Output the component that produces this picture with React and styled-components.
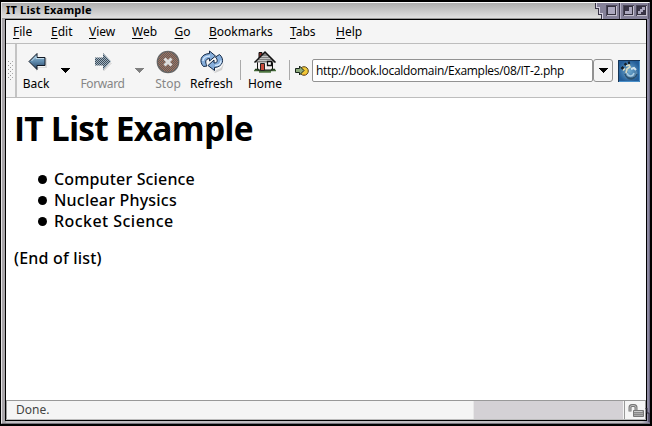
import React from 'react';
import styled, { createGlobalStyle } from 'styled-components';

const Global = createGlobalStyle`
  html, body { margin: 0; padding: 0; background: #000; overflow: hidden; }
  * { box-sizing: border-box; }
  svg { display: block; flex: none; }
`;

const Frame = styled.div`
  width: 652px;
  height: 426px;
  padding: 2px 2px 2px 1px;
  background: #000;
  font-family: "Noto Sans", "Open Sans", sans-serif;
  color: #000;
`;
const Bevel = styled.div`
  position: relative;
  height: 422px;
  background: linear-gradient(90deg, #a8a5a9 0 4px, #c0bdc1 4px 640px, #8a86a0 646px);
  border-top: 1px solid #f8f8f8;
  border-left: 1px solid #e4e2e4;
  border-bottom: 1px solid #77747c;
  border-right: 1px solid #6a6780;
`;
const TitleBar = styled.header`
  display: flex;
  justify-content: space-between;
  height: 16px;
  background: linear-gradient(#aeaeae, #e0e0e0 92%, #999 93%);
`;
const Title = styled.h1`
  margin: 0;
  padding-left: 4px;
  font: bold 11px/14px "Noto Sans", sans-serif;
  letter-spacing: ${(p) => p.$spacing};
  white-space: nowrap;
`;
const Client = styled.div`
  display: flex;
  flex-direction: column;
  width: 642px;
  height: 402px;
  margin-left: 3px;
  border: 1px solid #000;
  background: #f5f5f5;
`;
const MenuBar = styled.nav`
  display: flex;
  height: 24px;
  border-bottom: 1px solid #bdbdbd;
  padding-left: 7px;
`;
const MenuItem = styled.span`
  width: ${(p) => p.$width}px;
  font-size: 12px;
  line-height: 23px;
  white-space: nowrap;
  &::first-letter { text-decoration: underline; text-underline-offset: 2px; }
`;
const Toolbar = styled.div`
  display: flex;
  height: 54px;
  flex: none;
  border-bottom: 1px solid #bdbdbd;
`;
const Grip = styled.div`
  width: 11px;
  padding: 17px 0 0 2px;
  border-right: 2px solid #c4c4c4;
`;
const ToolButton = styled.div`
  display: flex;
  flex-direction: column;
  align-items: center;
  width: ${(p) => p.$width}px;
  padding-top: 4px;
  color: ${(p) => (p.$disabled ? '#858585' : '#000')};
`;
const ToolLabel = styled.span`
  font-size: 12px;
  line-height: 17px;
  letter-spacing: ${(p) => p.$spacing || 0}px;
  white-space: nowrap;
`;
const MenuArrow = styled.div`
  width: ${(p) => p.$width}px;
  padding: 24px 0 0 ${(p) => p.$left}px;
`;
const Divider = styled.div`
  width: 1px;
  height: 20px;
  margin: 16px 0 0 ${(p) => p.$gap || 0}px;
  background: #aaa;
`;
const Location = styled.div`
  display: flex;
  align-items: center;
  height: 23px;
  margin: 15px 0 0 5px;
`;
const Address = styled.div`
  width: 281px;
  height: 23px;
  margin-left: 3px;
  padding-left: 3px;
  border: 1px solid #929292;
  border-radius: 2px;
  background: #fff;
  font-family: "Open Sans", sans-serif;
  font-size: 12px;
  line-height: 21px;
  letter-spacing: ${(p) => p.$spacing}px;
  white-space: nowrap;
  overflow: hidden;
`;
const DropButton = styled.div`
  display: flex;
  align-items: center;
  justify-content: center;
  width: 20px;
  height: 23px;
  margin-right: 5px;
  border: 1px solid #929292;
  border-radius: 3px;
  background: #f5f5f5;
`;
const Page = styled.main`
  flex: 1;
  padding: 13px 0 0 8px;
  background: #fff;
  font-size: 16px;
  font-weight: 500;
  line-height: 21px;
  letter-spacing: 0.2px;
`;
const Heading = styled.h2`
  margin: 0 0 23px;
  font-family: "Open Sans", sans-serif;
  font-size: 33.5px;
  line-height: 35px;
  letter-spacing: -0.8px;
  white-space: nowrap;
`;
const List = styled.ul`
  margin: 0;
  padding: 0;
  list-style: none;
`;
const Item = styled.li`
  display: flex;
  align-items: center;
  height: 21px;
  padding-left: 24px;
  letter-spacing: ${(p) => p.$spacing}px;
  &::before {
    content: '';
    width: 9px;
    height: 9px;
    margin: 0 7px 0 0;
    border-radius: 50%;
    background: #000;
  }
`;
const Ending = styled.p`margin: 16px 0 0;`;
const StatusBar = styled.footer`
  display: flex;
  height: 20px;
  border-top: 1px solid #999;
  border-bottom: 1px solid #bbb;
`;
const Status = styled.span`
  width: 468px;
  padding-left: 9px;
  border-left: 1px solid #999;
  border-right: 1px solid #e8e8e8;
  color: #444;
  font-size: 12px;
  line-height: 17px;
`;
const Progress = styled.div`
  width: 150px;
  background: #d4d1d5;
  border-right: 1px solid #f5f5f5;
`;
const Security = styled.div`
  flex: 1;
  padding: 3px 0 0 3px;
  border-left: 1px solid #999;
  border-right: 1px solid #999;
`;
const Resize = styled.div`
  position: absolute;
  right: -1px;
  bottom: 1px;
`;

const Down = ({ color = '#000' }) => (
  <svg width="9" height="5" shapeRendering="crispEdges"><path d="M0 0h9v1H8v1H7v1H6v1H5v1H4V4H3V3H2V2H1V1H0z" fill={color} /></svg>
);
const BackIcon = () => (
  <svg width="26" height="27">
    <defs>
      <linearGradient id="steel" x2="0" y2="1"><stop stopColor="#9ec3dc" /><stop offset=".5" stopColor="#608caf" /><stop offset="1" stopColor="#233d5c" /></linearGradient>
    </defs>
    <path d="M13 23.500V19h9V10h2v10h-8z" fill="#ccc" opacity=".6" />
    <path d="M6 13.500 14 5.500V9.500H22V17.500H14V21.500z" fill="url(#steel)" stroke="#101824" />
    <path d="M8.500 13l4.500-4.500v2h8" fill="none" stroke="#bed9e8" />
  </svg>
);
const ForwardIcon = () => (
  <svg width="26" height="27">
    <defs><pattern id="mesh" width="2" height="2" patternUnits="userSpaceOnUse"><rect width="2" height="2" fill="#9fb4c2" /><path d="M0 0h1v1H0zM1 1h1v1H1z" fill="#3f4c5a" /></pattern></defs>
    <path d="M13 23l8-8h1l-8 8z" fill="#ccc" />
    <path d="M21 13.500 13 5v4.500H5v8h8V22z" fill="url(#mesh)" />
  </svg>
);
const StopIcon = () => (
  <svg width="26" height="27">
    <defs><pattern id="rust" width="2" height="2" patternUnits="userSpaceOnUse"><rect width="2" height="2" fill="#a8705c" /><path d="M0 0h1v1H0zM1 1h1v1H1z" fill="#5c605f" /></pattern></defs>
    <circle cx="13" cy="14" r="10.700" fill="url(#rust)" stroke="#666" strokeWidth="1.300" />
    <path d="M9.500 10.500l7 7m0-7l-7 7" stroke="#dedede" strokeWidth="3" />
  </svg>
);
const RefreshIcon = () => (
  <svg width="26" height="27">
    <path d="M12 21l4 3 1-2 5-2 3-5-2 7-7 3z" fill="#bbb" opacity=".6" />
    <g stroke="#122744" fill="#86aedb" strokeLinejoin="round">
      <path d="M4.500 18.500C0 14 1 6 10.500 5.500V3L16.500 8 10.500 13V10.500C6 11 6 14 8 18z" />
      <path d="M20.500 6.500C26 11 24 19 15.500 19.500V22.500L9 17.500 15 12V15C19 15 19 12 16.500 9z" />
    </g>
    <path d="M4 13c0-3 3-5 7-5M16 17.500c4 0 6-2 6-5" fill="none" stroke="#d2e6fa" strokeWidth="1.500" />
  </svg>
);
const HomeIcon = () => (
  <svg width="26" height="27">
    <path d="M2 22.500h22M7 24h12" stroke="#4d7540" strokeWidth="1.400" />
    <path d="M5.500 12h15v10h-15z" fill="#f5f0f0" stroke="#111" />
    <path d="M7 4.500h3v6H7z" fill="#98352b" stroke="#111" />
    <path d="M3 13.500 12.500 4 23 14.500H4z" fill="#808080" />
    <path d="M5 12.500h15M7 10.500h11M9 8.500h7" stroke="#d5d5d5" strokeWidth=".8" />
    <path d="M2.500 14.500 13 4 23.500 14.500" fill="none" stroke="#111" strokeWidth="1.500" />
    <path d="M8.500 15.500h4v7h-4z" fill="#c94b3c" stroke="#222" />
    <path d="M15.500 13.500h4v4h-4z" fill="#fff" stroke="#111" strokeWidth="1.300" />
    <path d="M3 21.500h4M19 21.500h4" stroke="#243d21" strokeWidth="1.500" />
  </svg>
);
const GoIcon = () => (
  <svg width="14" height="13">
    <circle cx="9" cy="7" r="4.300" fill="#f0c838" stroke="#554420" />
    <path d="M.5 4.500h4V2L9 6.500 4.500 11V8.500h-4z" fill="#8dab7c" stroke="#18251b" />
    <path d="M8 10.500h3" stroke="#d08822" />
  </svg>
);
const BrowserLogo = () => (
  <svg width="22" height="22">
    <defs><radialGradient id="sky"><stop stopColor="#71abd0" /><stop offset="1" stopColor="#235d98" /></radialGradient></defs>
    <path d="M0 0h22v22H0z" fill="url(#sky)" />
    <path d="M.5 22V.5H22" fill="none" stroke="#153456" /><path d="M21.500 1v20.500H1" fill="none" stroke="#4a8fc8" />
    <path d="M7 10c-2 4 0 9 5 9.500s8-4 7-8l-3-1c1 4-1 5-3 5s-4-1-3-4z" fill="#5584aa" />
    <path d="M7 14c1 5 10 6 12 0-1 6-10 8-12 0z" fill="#2b506e" stroke="#2b506e" />
    <path d="M9 13c1 4 6 4 7 0" fill="none" stroke="#a9cce2" strokeWidth="1.500" />
    <path d="M3.500 9l2-2M6.500 5l2-1.500M10 3l2-.5" stroke="#141e28" strokeWidth="2.500" />
    <path d="M5 10.500l2-2M8 6l3-1 1 2-3 2-1 4" fill="none" stroke="#d8d9c0" strokeWidth="1.700" />
    <path d="M13 9l3-1 2 2" fill="none" stroke="#d2e3ec" strokeWidth="2" />
  </svg>
);
const WindowControls = () => (
  <svg width="54" height="16" shapeRendering="crispEdges">
    <path d="M0 0h54v16H6V11H3V5H0z" fill="#858199" />
    <path d="M0 0v5h3v6h3v5" fill="none" stroke="#373345" />
    <path d="M1 0v4h3v6h3v6" fill="none" stroke="#d5d1e0" />
    <path d="M24.500 0v16" stroke="#393548" /><path d="M25.500 0v16" stroke="#bab5cb" />
    {[11, 28, 41].map((x, i) => (
      <g key={x} transform={`translate(${x} 2)`}>
        <path d="M.5 10.500V.5h10" fill="none" stroke="#4b475b" />
        <path d="M.5 10.500h10V.5" fill="none" stroke="#c5c1d0" />
        <path d="M1.500 1.500h8v8h-8z" fill="#aca8bf" stroke="#34303f" />
        {i > 0 && <path d={i === 1 ? 'M2 2h4v4H2z' : 'M2 2h4v2H4v2H2zM7 5h2v4H5V7h2z'} fill="#3a3549" />}
      </g>
    ))}
    <path d="M53.500 0v16" stroke="#575267" />
  </svg>
);
const Unlocked = () => (
  <svg width="17" height="14">
    <path d="M2 7.500V3.500Q2 1.500 4 1.500h2Q8 1.500 8 3.500V6" fill="none" stroke="#777" strokeWidth="3" />
    <path d="M2 7V3.500Q2 1.500 4 1.500h2Q8 1.500 8 3.500V6" fill="none" stroke="#bbb" />
    <path d="M5.500 6.500h10v6h-10z" fill="#aaa" stroke="#777" />
    <path d="M6 8.500h9M6 10.500h9" stroke="#888" /><path d="M6 7.500h8" stroke="#ccc" />
  </svg>
);
const menus = [
  ['File', 38], ['Edit', 38], ['View', 43], ['Web', 42.500], ['Go', 34.500], ['Bookmarks', 81], ['Tabs', 46], ['Help', 40],
];

export default function App() {
  return (
    <Frame><Global />
      <Bevel>
        <TitleBar><Title $spacing="0.2px">IT List Example</Title><WindowControls /></TitleBar>
        <Client>
          <MenuBar>{menus.map(([name, width]) => <MenuItem key={name} $width={width}>{name}</MenuItem>)}</MenuBar>
          <Toolbar>
            <Grip><svg width="5" height="19">{Array.from({ length: 10 }, (_, i) => <path key={i} d={`M${i % 2 ? 2 : 0} ${i * 2}h1v1h-1z`} fill="#999" />)}{Array.from({ length: 5 }, (_, i) => <path key={i} d={`M4 ${i * 4}h1v1H4z`} fill="#aaa" />)}</svg></Grip>
            <ToolButton $width={38}><BackIcon /><ToolLabel>Back</ToolLabel></ToolButton>
            <MenuArrow $width={17} $left={6}><Down /></MenuArrow>
            <ToolButton $width={61} $disabled><ForwardIcon /><ToolLabel $spacing={-0.4}>Forward</ToolLabel></ToolButton>
            <MenuArrow $width={17} $left={2}><Down color="#808080" /></MenuArrow>
            <ToolButton $width={36} $disabled><StopIcon /><ToolLabel>Stop</ToolLabel></ToolButton>
            <ToolButton $width={51}><RefreshIcon /><ToolLabel>Refresh</ToolLabel></ToolButton>
            <Divider $gap={3} />
            <ToolButton $width={48}><HomeIcon /><ToolLabel>Home</ToolLabel></ToolButton>
            <Divider />
            <Location><GoIcon /><Address $spacing={-0.3}>http://book.localdomain/Examples/08/IT-2.php</Address><DropButton><Down /></DropButton><BrowserLogo /></Location>
          </Toolbar>
          <Page>
            <Heading>IT List Example</Heading>
            <List><Item $spacing={0.15}>Computer Science</Item><Item $spacing={0.2}>Nuclear Physics</Item><Item $spacing={0.45}>Rocket Science</Item></List>
            <Ending>(End of list)</Ending>
          </Page>
          <StatusBar><Status>Done.</Status><Progress /><Security><Unlocked /></Security></StatusBar>
        </Client>
        <Resize><svg width="5" height="14"><path d="M0 0h2v5h2v9" fill="none" stroke="#302c3c" /></svg></Resize>
      </Bevel>
    </Frame>
  );
}
